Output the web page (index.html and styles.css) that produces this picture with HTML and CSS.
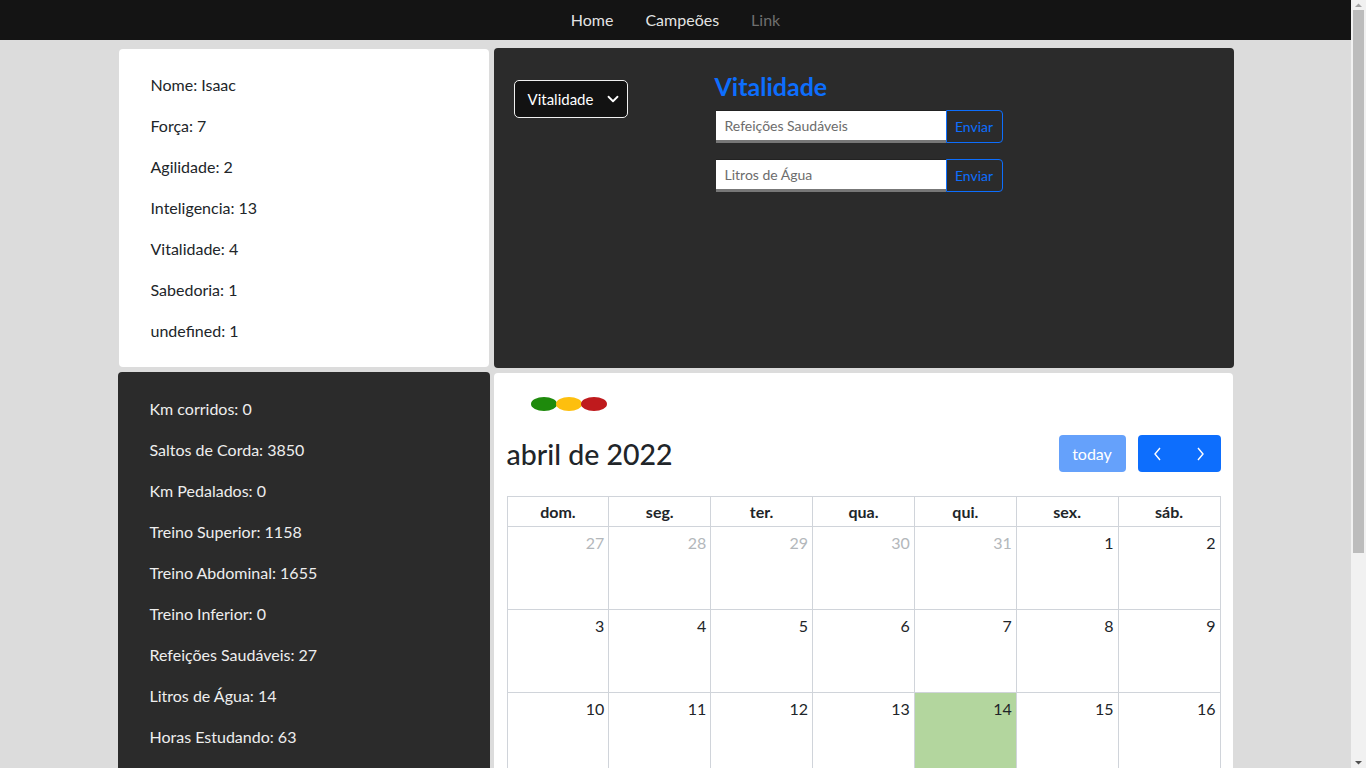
FILE: index.html
```html
<!DOCTYPE html>
<html lang="pt-BR">
<head>
<meta charset="utf-8">
<title>Campeões</title>
<link rel="stylesheet" href="styles.css">
</head>
<body>
<nav class="navbar">
  <a class="nav-link active" href="#">Home</a>
  <a class="nav-link active" href="#">Campeões</a>
  <a class="nav-link muted" href="#">Link</a>
</nav>
<main class="container">
  <section class="card card-light stats">
    <p>Nome: Isaac</p>
    <p>Força: 7</p>
    <p>Agilidade: 2</p>
    <p>Inteligencia: 13</p>
    <p>Vitalidade: 4</p>
    <p>Sabedoria: 1</p>
    <p>undefined: 1</p>
  </section>
  <section class="card card-dark form-card">
    <div class="select">
      <span>Vitalidade</span>
      <svg width="12" height="12" viewBox="0 0 16 16"><path d="M2 5l6 6 6-6" fill="none" stroke="#fff" stroke-width="2.4" stroke-linecap="round" stroke-linejoin="round"/></svg>
    </div>
    <div class="form-area">
      <h2 class="form-title">Vitalidade</h2>
      <div class="input-group">
        <input class="input" placeholder="Refeições Saudáveis">
        <button class="btn-outline">Enviar</button>
      </div>
      <div class="input-group">
        <input class="input" placeholder="Litros de Água">
        <button class="btn-outline">Enviar</button>
      </div>
    </div>
  </section>
  <section class="card card-dark stats stats-dark">
    <p>Km corridos: 0</p>
    <p>Saltos de Corda: 3850</p>
    <p>Km Pedalados: 0</p>
    <p>Treino Superior: 1158</p>
    <p>Treino Abdominal: 1655</p>
    <p>Treino Inferior: 0</p>
    <p>Refeições Saudáveis: 27</p>
    <p>Litros de Água: 14</p>
    <p>Horas Estudando: 63</p>
  </section>
  <section class="card card-light calendar">
    <div class="dots">
      <span class="dot green"></span><span class="dot yellow"></span><span class="dot red"></span>
    </div>
    <div class="toolbar">
      <h2 class="cal-title">abril de 2022</h2>
      <div class="toolbar-buttons">
        <button class="btn-today">today</button>
        <div class="btn-group">
          <button class="btn-nav"><svg width="12" height="16" viewBox="0 0 12 16"><path d="M8 2L3 8l5 6" fill="none" stroke="#fff" stroke-width="1.4"/></svg></button>
          <button class="btn-nav"><svg width="12" height="16" viewBox="0 0 12 16"><path d="M4 2l5 6-5 6" fill="none" stroke="#fff" stroke-width="1.4"/></svg></button>
        </div>
      </div>
    </div>
    <table class="cal-table">
      <thead>
        <tr><th>dom.</th><th>seg.</th><th>ter.</th><th>qua.</th><th>qui.</th><th>sex.</th><th>sáb.</th></tr>
      </thead>
      <tbody>
        <tr><td class="other">27</td><td class="other">28</td><td class="other">29</td><td class="other">30</td><td class="other">31</td><td>1</td><td>2</td></tr>
        <tr><td>3</td><td>4</td><td>5</td><td>6</td><td>7</td><td>8</td><td>9</td></tr>
        <tr><td>10</td><td>11</td><td>12</td><td>13</td><td class="today">14</td><td>15</td><td>16</td></tr>
        <tr><td>17</td><td>18</td><td>19</td><td>20</td><td>21</td><td>22</td><td>23</td></tr>
        <tr><td>24</td><td>25</td><td>26</td><td>27</td><td>28</td><td>29</td><td>30</td></tr>
        <tr><td class="other">1</td><td class="other">2</td><td class="other">3</td><td class="other">4</td><td class="other">5</td><td class="other">6</td><td class="other">7</td></tr>
      </tbody>
    </table>
  </section>
</main>
<div class="scrollbar" aria-hidden="true">
  <svg class="sb-arrow sb-up" width="15" height="10" viewBox="0 0 15 10"><path d="M4 7h7L7.5 3.5z" fill="#a3a3a3"/></svg>
  <div class="sb-thumb"></div>
  <svg class="sb-arrow sb-down" width="15" height="10" viewBox="0 0 15 10"><path d="M4 3h7L7.5 6.5z" fill="#505050"/></svg>
</div>
</body>
</html>
```
FILE: styles.css
```css
* { box-sizing: border-box; }
html, body { margin: 0; }
body {
  background: #dcdcdc;
  font-family: "Lato", "Noto Sans", sans-serif;
  font-size: 16px;
  line-height: 24px;
  color: #212529;
  margin-right: 15px;
}
.navbar {
  height: 40px;
  background: #141414;
  display: flex;
  justify-content: center;
  align-items: center;
  gap: 32px;
}
.nav-link {
  text-decoration: none;
  font-size: 16px;
  color: rgba(255,255,255,0.9);
}
.nav-link.muted { color: #6f6f6f; }
.container {
  width: 1116px;
  margin: 0 auto;
  padding-top: 8px;
  display: grid;
  grid-template-columns: 372px 744px;
  row-gap: 4px;
  padding-bottom: 40px;
}
.card { border-radius: 4px; }
.card-light { background: #fff; }
.card-dark { background: #2b2b2b; color: #eee; }
.stats {
  display: flex;
  flex-direction: column;
  gap: 17px;
  padding: 24px 32px;
}
.stats p { margin: 0; }
.card-light.stats { margin: 1px; }
.form-card {
  margin-left: 4px;
  height: 320px;
  display: flex;
  padding: 32px 20px;
}
.select {
  width: 114px;
  height: 38px;
  background: #121212;
  border: 1px solid #f0f0f0;
  border-radius: 5px;
  display: flex;
  align-items: center;
  justify-content: space-between;
  padding: 0 8px 0 13px;
  font-size: 15px;
  color: #fff;
}
.form-area { margin-left: 87px; }
.form-title {
  margin: -9px 0 0 0;
  font-size: 25px;
  line-height: 30px;
  font-weight: 700;
  color: #0d6efd;
}
.input-group {
  display: flex;
  margin-top: 9px;
  margin-left: 1px;
}
.input-group + .input-group { margin-top: 16px; }
.input {
  width: 230px;
  height: 33px;
  border: none;
  border-top: 1px solid #222;
  border-bottom: 3px solid #777;
  background: #fff;
  font-family: inherit;
  font-size: 14px;
  padding: 0 9px;
}
.input::placeholder { color: #6c6c6c; }
.btn-outline {
  height: 33px;
  width: 57px;
  background: transparent;
  border: 1px solid #0d6efd;
  border-radius: 0 4px 4px 0;
  color: #0d6efd;
  font-family: inherit;
  font-size: 14px;
  padding: 0;
}
.stats-dark { padding-top: 25px; }
.calendar {
  margin-left: 4px;
  margin-top: 1px;
  padding: 24px 12px 20px 13px;
  width: 739px;
}
.dots { display: flex; padding-left: 24px; height: 14px; }
.dot { width: 26px; height: 14px; border-radius: 50%; margin-right: -1px; }
.green { background: #1e8a0c; }
.yellow { background: #fdbf0e; }
.red { background: #bf1a1d; }
.toolbar {
  display: flex;
  justify-content: space-between;
  align-items: center;
  margin-top: 24px;
  height: 37px;
  margin-bottom: 24px;
}
.cal-title {
  margin: 0;
  font-size: 28.5px;
  font-weight: 500;
  color: #212529;
}
.toolbar-buttons { display: flex; gap: 12px; }
.btn-today {
  height: 37px;
  width: 67px;
  background: #65a1fb;
  border: none;
  border-radius: 4px;
  color: #fff;
  font-family: inherit;
  font-size: 16px;
}
.btn-group { display: flex; }
.btn-nav {
  height: 37px;
  width: 41.5px;
  background: #0d6efd;
  border: none;
  display: flex;
  align-items: center;
  justify-content: center;
}
.btn-nav:first-child { border-radius: 4px 0 0 4px; }
.btn-nav:last-child { border-radius: 0 4px 4px 0; }
.cal-table {
  width: 714px;
  border-collapse: collapse;
  table-layout: fixed;
}
.cal-table th, .cal-table td { border: 1px solid #d0d4da; }
.cal-table th {
  height: 30px;
  font-size: 16px;
  font-weight: 700;
  padding: 0;
}
.cal-table td {
  height: 83px;
  vertical-align: top;
  text-align: right;
  padding: 4px 4px;
}
.cal-table td.other { color: #b3b7bb; }
.cal-table td.today { background: #b3d69e; }
.scrollbar {
  position: fixed;
  top: 0;
  right: 0;
  width: 15px;
  height: 100vh;
  background: #f1f1f1;
  display: flex;
  flex-direction: column;
  align-items: center;
}
.sb-arrow { display: block; flex: none; }
.sb-thumb {
  width: 11px;
  height: 543px;
  background: #bcbcbc;
  margin-bottom: auto;
}
```
